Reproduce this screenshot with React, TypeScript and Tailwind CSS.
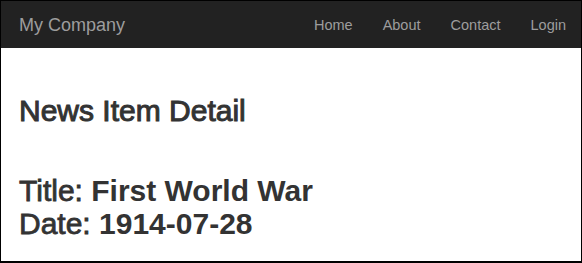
export default function App() {
  const links = ['Home', 'About', 'Contact', 'Login'];

  return (
    <div
      className="w-[582px] h-[263px] border border-b-2 border-black bg-white text-[#333] overflow-hidden"
      style={{ fontFamily: '"Liberation Sans", Arial, sans-serif' }}
    >
      {/* Navbar */}
      <nav className="h-[47px] bg-[#222] flex items-center justify-between pl-[18px]">
        <a className="text-[18px] leading-5 text-[#9d9d9d]">My Company</a>
        <ul className="flex items-center">
          {links.map((l) => (
            <li key={l} className="px-[15px] text-[14.5px] leading-5 text-[#9d9d9d]">
              {l}
            </li>
          ))}
        </ul>
      </nav>

      {/* Content */}
      <div className="pl-[18px]">
        <h2 className="mt-[46px] text-[30px] leading-[33px] [-webkit-text-stroke:1px_#333]">
          News Item Detail
        </h2>
        <h3 className="mt-[47px] text-[30px] leading-[33px]">
          <div>
            <span className="[-webkit-text-stroke:0.8px_#333]">Title: </span>
            <strong className="font-bold">First World War</strong>
          </div>
          <div>
            <span className="[-webkit-text-stroke:0.8px_#333]">Date: </span>
            <strong className="font-bold">1914-07-28</strong>
          </div>
        </h3>
      </div>
    </div>
  );
}
